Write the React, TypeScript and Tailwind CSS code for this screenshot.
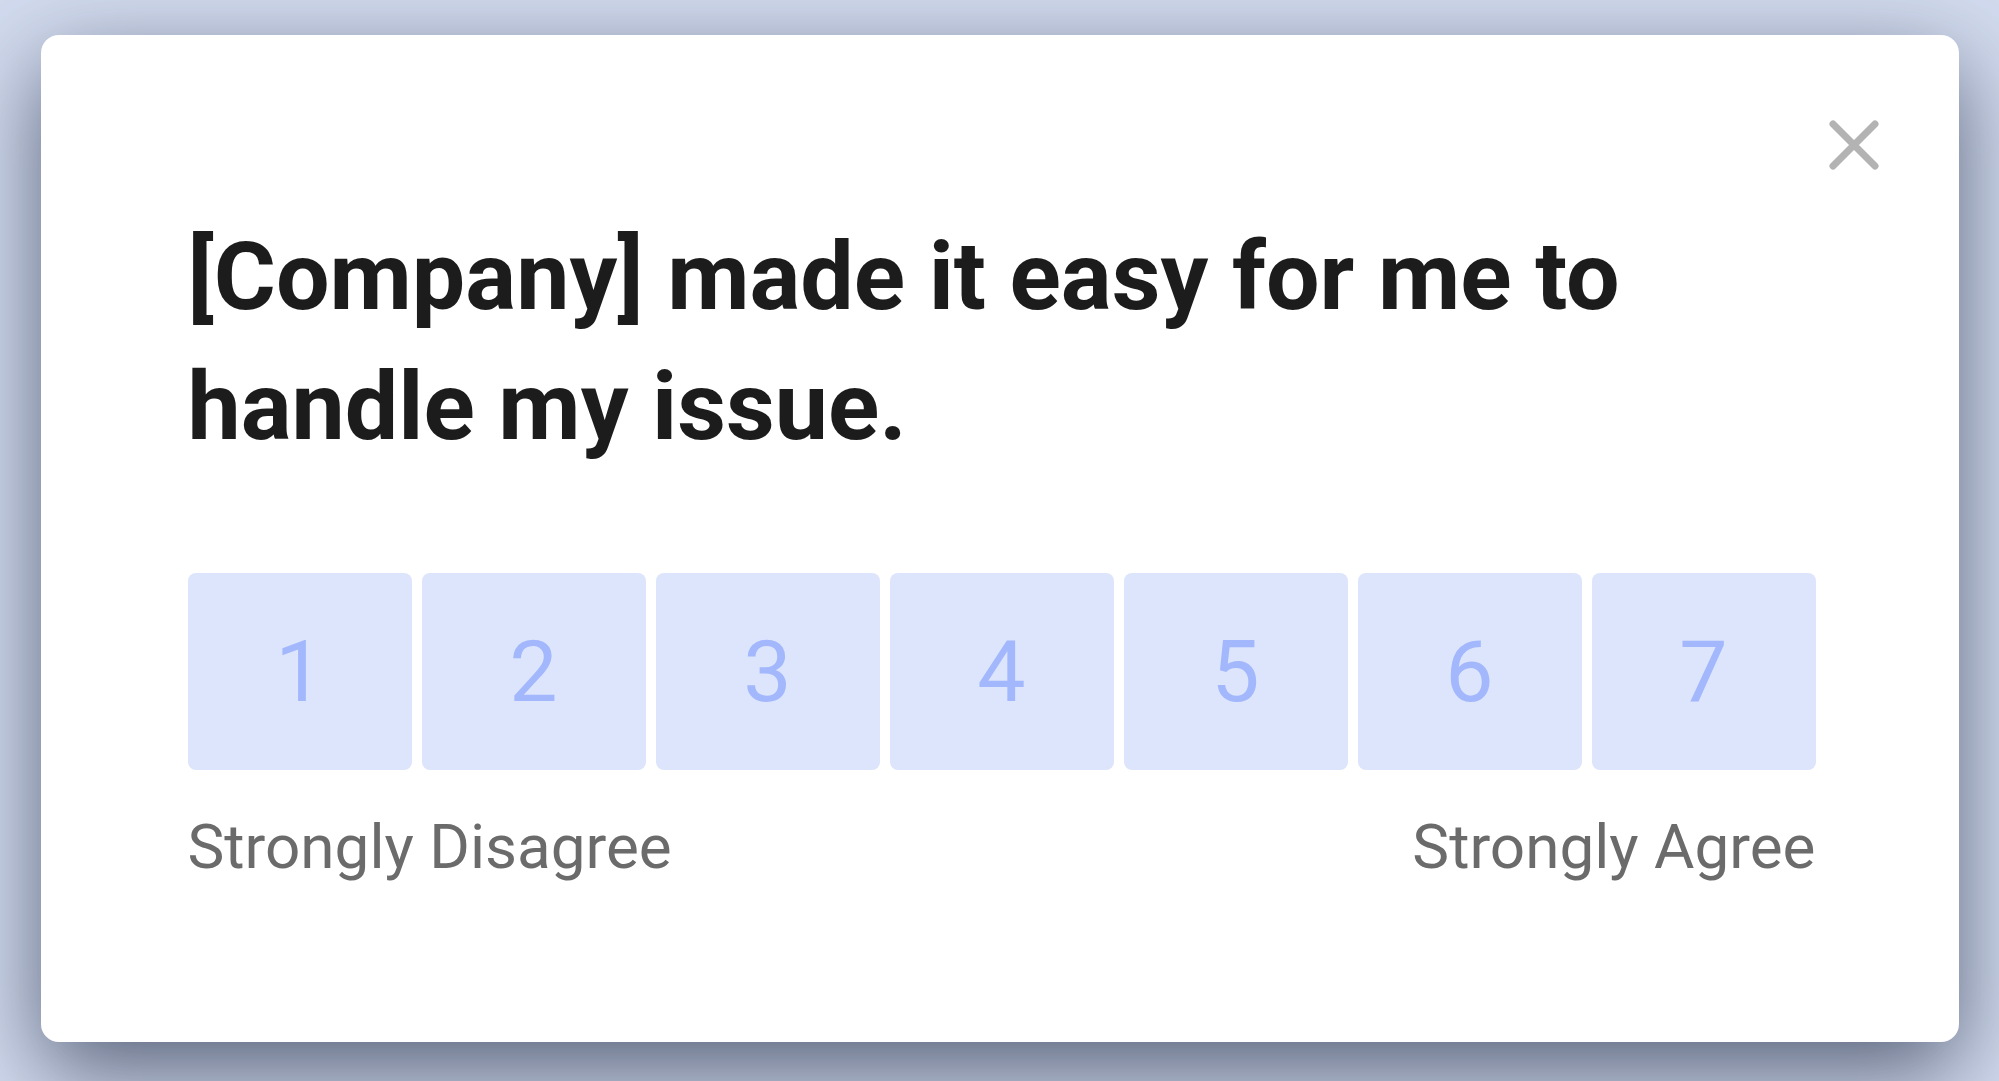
const scale = [1, 2, 3, 4, 5, 6, 7];

function CloseIcon() {
  return (
    <svg width="56" height="56" viewBox="0 0 56 56" fill="none">
      <path
        d="M7 7L49 49M49 7L7 49"
        stroke="#b3b3b3"
        strokeWidth="7"
        strokeLinecap="round"
      />
    </svg>
  );
}

export default function App() {
  return (
    <main className="flex h-[1081px] w-full items-start justify-center bg-[#d3dcef] pt-[35px] font-['Roboto',sans-serif]">
      <section className="relative flex h-[1007px] w-[1918px] flex-col rounded-[18px] bg-white pl-[147px] pr-[143px] pt-[177px] shadow-[0_30px_90px_rgba(35,45,70,0.7)]">
        <button
          type="button"
          aria-label="Close"
          className="absolute right-[77px] top-[82px] flex h-[56px] w-[56px] items-center justify-center"
        >
          <CloseIcon />
        </button>

        <h1 className="max-w-[1500px] text-[95px] font-bold leading-[130px] text-[#1c1c1c]">
          [Company] made it easy for me to handle my issue.
        </h1>

        <div className="mt-[101px] flex gap-[10px]">
          {scale.map((n) => (
            <button
              key={n}
              type="button"
              className="flex h-[197px] flex-1 items-center justify-center rounded-[8px] bg-[#dde5fd] text-[86px] leading-none text-[#a3b8fc]"
            >
              {n}
            </button>
          ))}
        </div>

        <div className="mt-[40px] flex justify-between text-[62px] leading-[73px] text-[#6b6b6b]">
          <span>Strongly Disagree</span>
          <span>Strongly Agree</span>
        </div>
      </section>
    </main>
  );
}
